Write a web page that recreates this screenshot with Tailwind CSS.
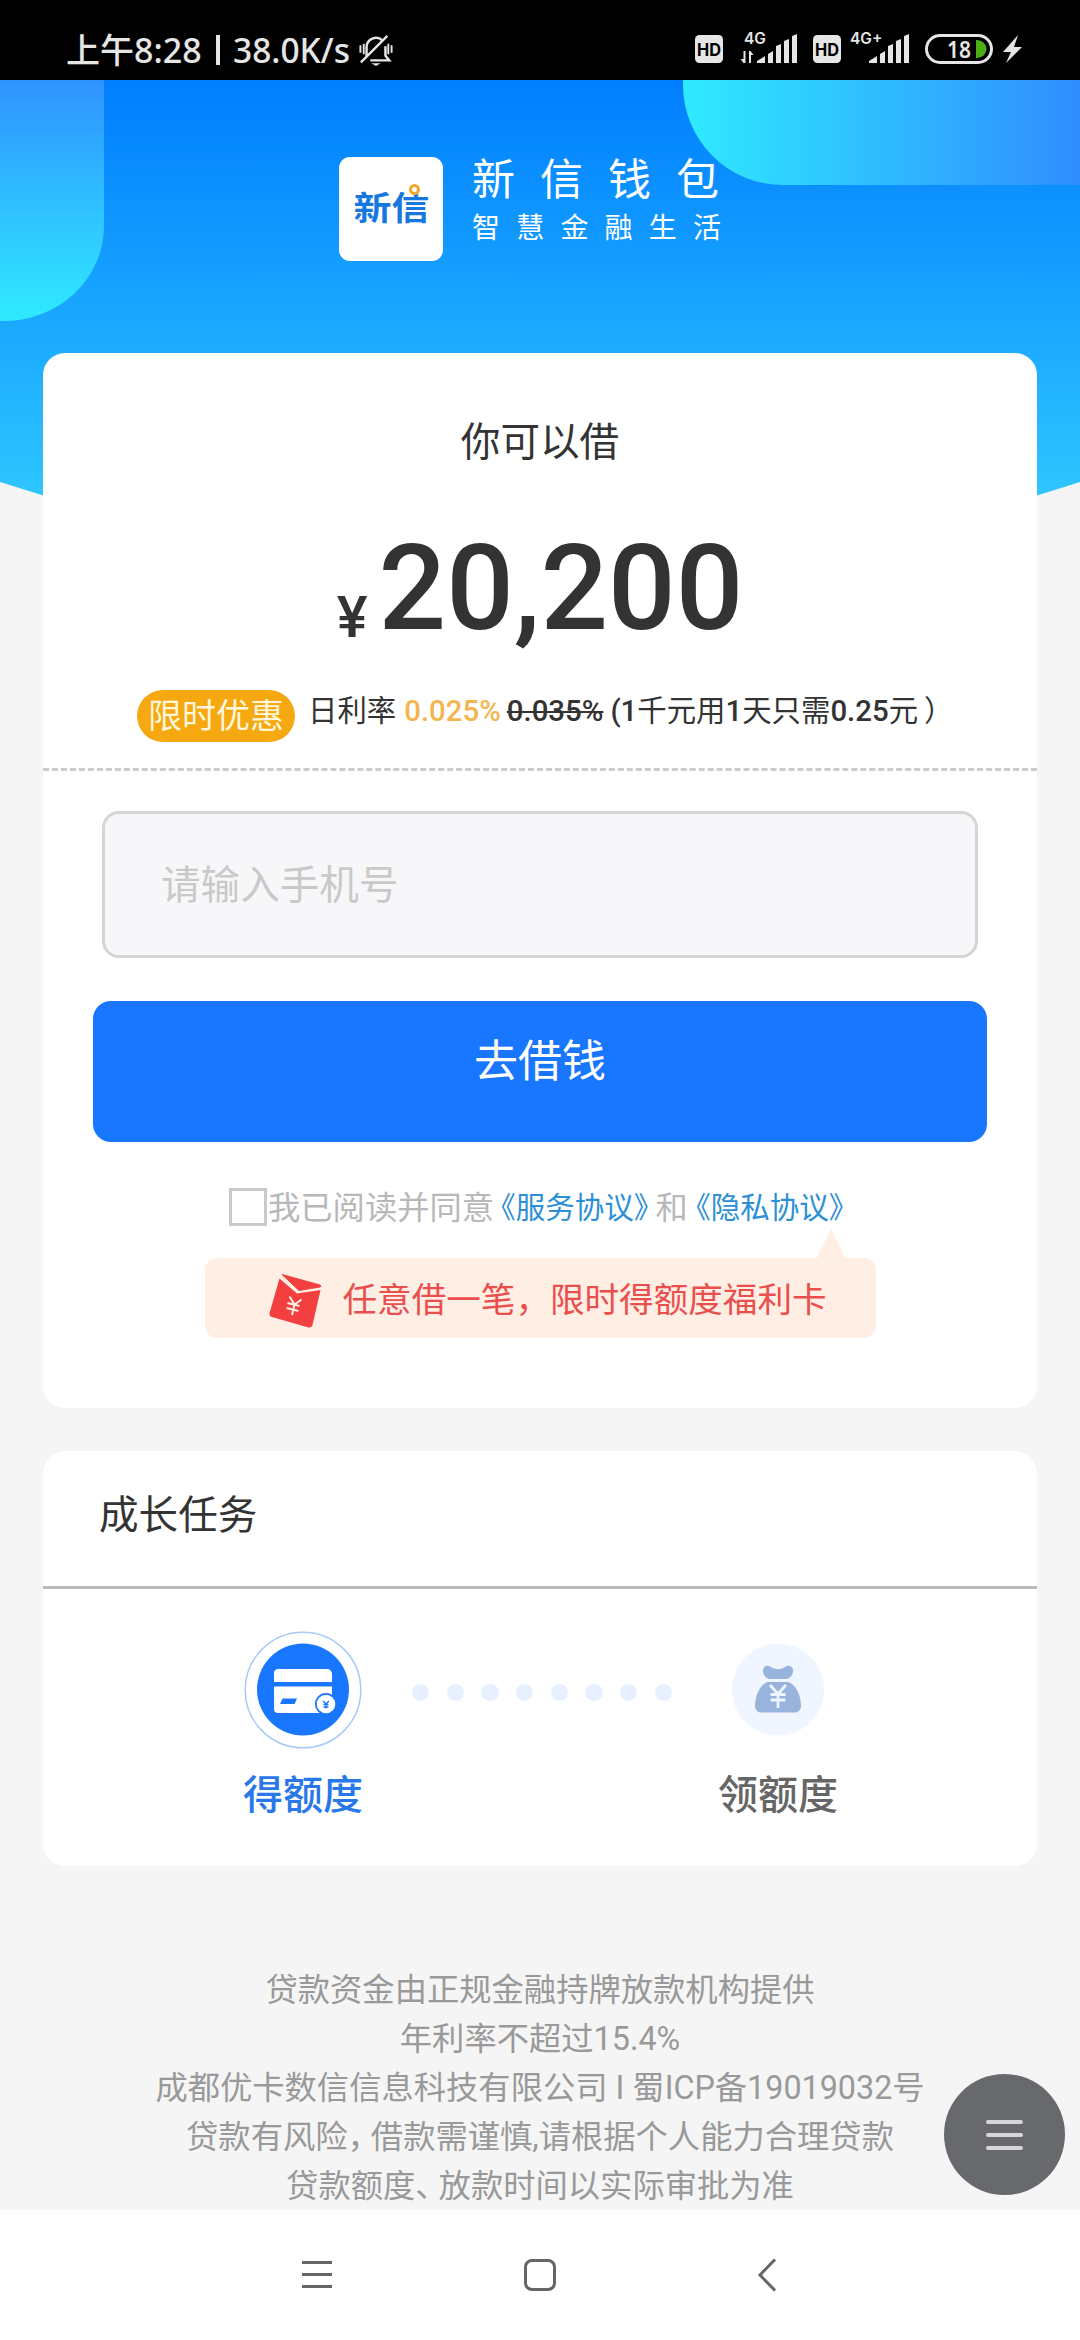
<!DOCTYPE html>
<html lang="zh-CN">
<head>
<meta charset="utf-8">
<title>新信钱包</title>
<script src="https://cdn.jsdelivr.net/npm/@tailwindcss/browser@4"></script>
</head>
<body class="w-[1080px] h-[2340px] overflow-hidden bg-[#f5f5f5] font-[Roboto,'Noto_Sans_CJK_SC',sans-serif] text-[#333]">
<div class="relative flex flex-col w-[1080px] h-[2340px]">

  <!-- status bar -->
  <header class="flex h-20 w-full items-start bg-black text-[#e6e6e6]">
    <div class="flex items-center pl-[66px] mt-7 h-11 font-[Lato,'Noto_Sans_CJK_SC',sans-serif] whitespace-nowrap">
      <span class="w-[139px] text-[34px] leading-11 font-medium font-['Noto_Sans','Noto_Sans_CJK_SC',sans-serif]">上午8:28</span>
      <span class="ml-[11px] mr-[13px] h-[30px] w-[4px] bg-[#e6e6e6]"></span>
      <span class="w-[118px] text-[33.500px] leading-11 font-medium font-['Noto_Sans',sans-serif]">38.0K/s</span>
      <svg class="ml-[8px] w-[34px] h-[34px]" viewBox="0 0 36 36" fill="none" stroke="#e6e6e6" stroke-width="2.6">
        <path d="M8 25V15a10 10 0 0 1 17-7M28 14v10l4 5H12M2 31L30 3"/>
        <path d="M1.500 13v8M5 11.500v11M31 11.500v11M34.500 13v8" stroke-width="2"/>
        <path d="M13 32h10l-5 3z" fill="#e6e6e6" stroke="none"/>
      </svg>
    </div>
    <svg class="ml-auto mr-[50px] mt-5 w-[340px] h-15" viewBox="690 20 340 60" fill="#e6e6e6">
      <rect x="695" y="35" width="28" height="28" rx="4.500"/>
      <text x="709" y="55.500" text-anchor="middle" font-family="Inter" font-weight="700" font-size="17" textLength="24" lengthAdjust="spacingAndGlyphs" fill="#000">HD</text>
      <text x="744" y="44" font-family="Inter" font-weight="600" font-size="15.500">4G</text>
      <path d="M743.500 51h2v12h-2l-3-4h3zM749 51h1.500l3 4h-2.500v8H749z"/>
      <path d="M757 63v-2l8-5v7zM768 54l5-3v12h-5zM776 46l5-2v19h-5zM784 41l5-2v24h-5zM792 36l5-2v29h-5z"/>
      <rect x="813" y="35" width="28" height="28" rx="4.500"/>
      <text x="827" y="55.500" text-anchor="middle" font-family="Inter" font-weight="700" font-size="17" textLength="24" lengthAdjust="spacingAndGlyphs" fill="#000">HD</text>
      <text x="850" y="44" font-family="Inter" font-weight="600" font-size="15.500">4G+</text>
      <path d="M869 63v-2l8-5v7zM880 54l5-3v12h-5zM888 46l5-2v19h-5zM896 41l5-2v24h-5zM904 36l5-2v29h-5z"/>
      <rect x="926.500" y="35.500" width="65" height="27" rx="13.500" fill="none" stroke="#e6e6e6" stroke-width="3"/>
      <text x="947" y="57.500" font-family="Noto Sans" font-weight="600" font-size="23" textLength="24" lengthAdjust="spacingAndGlyphs">18</text>
      <path d="M976 40h1a9.500 9 0 0 1 0 18h-1z" fill="#4caf18"/>
      <path d="M1018 35l-15 17h8l-5 11 16-16h-8z"/>
    </svg>
  </header>

  <!-- hero background -->
  <svg class="absolute left-0 top-20 w-[1080px] h-[480px]" viewBox="0 80 1080 480">
    <defs>
      <linearGradient id="sky" x1="0" y1="0" x2="0" y2="1"><stop offset="0" stop-color="#007eff"/><stop offset="1" stop-color="#36d2ff"/></linearGradient>
      <linearGradient id="pillL" x1="0" y1="0" x2="0" y2="1"><stop offset="0" stop-color="#2f92ff"/><stop offset="1" stop-color="#2feaff"/></linearGradient>
      <linearGradient id="pillR" x1="0" y1="0" x2="1" y2="0"><stop offset="0" stop-color="#2feaff"/><stop offset="1" stop-color="#2f8dff"/></linearGradient>
    </defs>
    <path d="M0 80H1080V482Q810 570 540 570T0 482z" fill="url(#sky)"/>
    <path d="M0 80H104V226A100 95 0 0 1 4 321H0z" fill="url(#pillL)"/>
    <path d="M683 80H1080V185H783A100 100 0 0 1 683 85z" fill="url(#pillR)"/>
  </svg>

  <!-- brand -->
  <section class="relative flex h-[273px] pl-[339px] pt-[77px]">
    <div class="relative flex size-[104px] items-center justify-center rounded-[11px] bg-white">
      <span class="scale-x-[1.04] scale-y-[0.9] text-[36.500px] leading-10 font-bold text-[#1677e0] whitespace-nowrap">新信</span>
      <span class="absolute left-[70px] top-[27px] size-[11px] rounded-full border-[3.500px] border-[#f0a92e] bg-white"></span>
    </div>
    <div class="ml-[29px] flex flex-col text-white whitespace-nowrap">
      <span class="-mt-[2px] text-[43px] leading-[50px] tracking-[25px]">新信钱包</span>
      <span class="mt-[4px] text-[28px] leading-[40px] tracking-[16.200px]">智慧金融生活</span>
    </div>
  </section>

  <!-- loan card -->
  <main class="relative mx-[43px] flex h-[1055px] flex-col items-center rounded-[22px] bg-white">
    <h1 class="mt-[60px] text-[39.600px] leading-[60px]">你可以借</h1>
    <div class="mt-[46px] flex h-[140px] items-end font-medium">
      <span class="mb-[13px] mr-[11px] text-[58px] leading-[58px]">¥</span>
      <span class="text-[119px] leading-[140px]">20,200</span>
    </div>
    <div class="mt-[31px] flex h-[52px] w-full items-start pl-[94px] whitespace-nowrap">
      <span class="flex h-[52px] w-[158px] items-center justify-center rounded-full bg-[#f6a810] text-[34px] leading-[52px] text-[#fff6dc]">限时优惠</span>
      <p class="ml-[13px] flex text-[29.400px] leading-[42px]">
        <span>日利率</span>
        <span class="ml-[8px] font-medium text-[#f3b64f]">0.025%</span>
        <span class="ml-[6px] font-medium line-through">0.035%</span>
        <span class="ml-[7px]"><b class="font-medium">(1</b>千元用<b class="font-medium">1</b>天只需<b class="font-medium">0.25</b>元</span>
        <span class="ml-[6px]">）</span>
      </p>
    </div>
    <div class="mt-[26px] w-full border-t-[3px] border-dashed border-[#ccc]"></div>
    <div class="mt-10 flex h-[147px] w-[876px] items-center rounded-[17px] border-[3px] border-[#d4d5d6] bg-[#f7f7fa] pl-[56px] pt-[2px] text-[39.600px] leading-[60px] text-[#c9c9c9]">请输入手机号</div>
    <button class="mt-[43px] flex h-[141px] w-[894px] justify-center rounded-[18px] bg-[#1876ff] pt-[33px] text-[44px] leading-[56px] text-white">去借钱</button>
    <div class="mt-[46px] flex h-[38px] w-full items-center pl-[186px] text-[32.300px] leading-[42px] text-[#b8b8b8] whitespace-nowrap">
      <span class="size-[38px] border-[3px] border-[#c8cacc]"></span>
      <span class="ml-px mt-[2px]">我已阅读并同意</span>
      <span class="ml-[7px] mt-[2px] text-[29.500px] text-[#2d8fd5] [font-feature-settings:'halt']">《服务协议》</span>
      <span class="ml-[7px] mt-[2px]">和</span>
      <span class="ml-[8px] mt-[2px] text-[29.500px] text-[#2d8fd5] [font-feature-settings:'halt']">《隐私协议》</span>
    </div>
    <div class="relative mt-8 flex h-20 w-[671px] items-center rounded-[12px] bg-[#feeee4] pl-[64px]">
      <svg class="absolute -top-[29px] left-[611px] h-[30px] w-[30px]" viewBox="0 0 30 30"><path d="M15 0L30 30H0z" fill="#feeee4"/></svg>
      <svg class="mt-[5px] h-[56px] w-[54px]" viewBox="269 1273 54 56">
        <path d="M282 1274.500l38 10.500q2 1 0 2l-21 3.500z" fill="#f43f40" stroke="#f43f40" stroke-linejoin="round"/>
        <path d="M279.500 1278.500L297 1293.500l23.500-3.500-8 35q-1 3-4 2.500L272 1317q-3-1-2.500-4z" fill="#f43f40"/>
        <path d="M289 1297l5 8 7-5M287 1303.500l12 3M286 1308.500l12 3M294 1305l-2.500 10.500" transform="translate(.5 -.5)" fill="none" stroke="#feeee4" stroke-width="2"/>
      </svg>
      <span class="ml-[20px] mt-[4px] text-[34.600px] leading-[50px] text-[#ea4f4d] whitespace-nowrap">任意借一笔，限时得额度福利卡</span>
    </div>
  </main>

  <!-- tasks -->
  <section class="mx-[43px] mt-[43px] flex h-[415px] flex-col rounded-[22px] bg-white">
    <h2 class="flex h-[138px] items-start border-b-[3px] border-[#bbb] pl-[56px] pt-[35px] text-[39.600px] leading-[60px]">成长任务</h2>
    <div class="mt-[42px] flex items-start pl-[200px]">
      <div class="flex w-[120px] flex-col items-center">
        <svg class="size-[118px]" viewBox="0 0 118 118">
          <circle cx="59" cy="59" r="57.800" fill="#fff" stroke="#a9caf8" stroke-width="1.500"/>
          <circle cx="59" cy="58.500" r="46" fill="#1876ff"/>
          <path d="M34 38h49a5 5 0 0 1 5 5v8H30v-8a4 4 0 0 1 4-5zM30 55.500h58V78a4 4 0 0 1-4 4H34a4 4 0 0 1-4-4z" fill="#fff"/>
          <path d="M38.500 67.500h14.500l-2.500 5.500H36z" fill="#1876ff"/>
          <circle cx="82" cy="73" r="11" fill="#1876ff"/><circle cx="82" cy="73" r="9.300" fill="#fff"/>
          <path d="M79 70l3 3 3-3M79.500 73.500h5M79.500 76h5M82 73v4.500" fill="none" stroke="#1876ff" stroke-width="1.300"/>
        </svg>
        <span class="mt-[17px] text-[40px] leading-[60px] font-medium text-[#2878ea] whitespace-nowrap">得额度</span>
      </div>
      <div class="ml-[49px] mt-[52.500px] flex gap-[17.400px]">
        <i class="size-[17.300px] rounded-full bg-[#e6f0ff]"></i><i class="size-[17.300px] rounded-full bg-[#e6f0ff]"></i><i class="size-[17.300px] rounded-full bg-[#e6f0ff]"></i><i class="size-[17.300px] rounded-full bg-[#e6f0ff]"></i><i class="size-[17.300px] rounded-full bg-[#e6f0ff]"></i><i class="size-[17.300px] rounded-full bg-[#e6f0ff]"></i><i class="size-[17.300px] rounded-full bg-[#e6f0ff]"></i><i class="size-[17.300px] rounded-full bg-[#e6f0ff]"></i>
      </div>
      <div class="ml-[46px] flex w-[120px] flex-col items-center">
        <svg class="size-[118px]" viewBox="0 0 118 118">
          <circle cx="59" cy="58.500" r="46" fill="#f0f6ff"/>
          <path d="M44 41c-1-5 4-8 8-5 5 3 9 3 14 0 4-3 9 0 8 5-1 4-3 6-6 7H50c-3-1-5-3-6-7z" fill="#98b3dc"/>
          <path d="M49 51h20c8 2 13 14 13 24 0 4-3 6.500-6 6.500H42c-3 0-6-2.500-6-6.500 0-10 5-22 13-24z" fill="#98b3dc"/>
          <path d="M51 54l8 9 8-9M51.500 63.500h15M51.500 69h15M59 62v15" fill="none" stroke="#f0f6ff" stroke-width="2.800"/>
        </svg>
        <span class="mt-[17px] text-[40px] leading-[60px] font-medium text-[#666] whitespace-nowrap">领额度</span>
      </div>
    </div>
  </section>

  <!-- disclaimer -->
  <footer class="mt-[100px] h-[244px] text-center text-[32.300px] leading-[49px] text-[#999] whitespace-nowrap">
    <p>贷款资金由正规金融持牌放款机构提供</p>
    <p>年利率不超过15.4%</p>
    <p>成都优卡数信信息科技有限公司 I 蜀ICP备19019032号</p>
    <p>贷款有风险<span class="tracking-[-9px]">，</span>借款需谨慎,请根据个人能力合理贷款</p>
    <p>贷款额度<span class="tracking-[-9px]">、</span>放款时间以实际审批为准</p>
  </footer>

  <!-- floating menu -->
  <div class="absolute left-[944px] top-[2074px] flex size-[121px] flex-col items-center justify-center gap-[9px] rounded-full bg-[#68696d]">
    <i class="h-1 w-[37px] rounded-full bg-[#d6d6d8]"></i>
    <i class="h-1 w-[37px] rounded-full bg-[#d6d6d8]"></i>
    <i class="h-1 w-[37px] rounded-full bg-[#d6d6d8]"></i>
  </div>

  <!-- system navigation -->
  <nav class="flex h-[130px] w-full bg-white">
    <svg class="h-[130px] w-[1080px]" viewBox="0 0 1080 130" fill="none" stroke="#666" stroke-width="3">
      <path d="M302 52.500h30M302 64.500h30M302 76.500h30"/>
      <rect x="525.500" y="50.500" width="29" height="29" rx="6.500"/>
      <path d="M775 49.500L760 65l15 15.500"/>
    </svg>
  </nav>
</div>
</body>
</html>
